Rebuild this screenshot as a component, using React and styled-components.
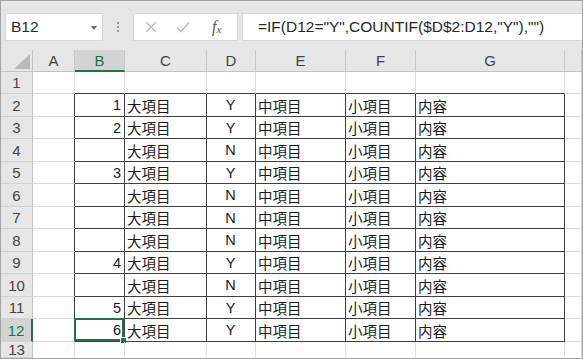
import React from "react";
import styled, { createGlobalStyle } from "styled-components";

const GREEN = "#217346";
const DARK = "#3f3f3f";
const GRID = "#dcdcdc";

const COLS = ["A", "B", "C", "D", "E", "F", "G", ""];
const WIDTHS = [32, 42, 50, 82, 49, 90, 70, 149, 17];
const HEIGHTS = [22, 22, 23, 22, 23, 22, 23, 22, 23, 22, 23, 22, 23, 16];

// [連番, 大項目の Y/N]
const DATA = [
  [1, "Y"], [2, "Y"], ["", "N"], [3, "Y"], ["", "N"], ["", "N"],
  ["", "N"], [4, "Y"], ["", "N"], [5, "Y"], [6, "Y"],
];

const GlobalStyle = createGlobalStyle`
  html, body { margin: 0; padding: 0; background: #fff; }
  body { font-family: "Liberation Sans", "Noto Sans CJK JP", sans-serif; }
`;

export default function App() {
  const rows = [];
  for (let r = 1; r <= 13; r++) {
    const item = DATA[r - 2];
    const inTable = r >= 2 && r <= 12;
    const selectedRow = r === 12;
    rows.push(
      <RowHeader key={`h${r}`} $selected={selectedRow}>{r}</RowHeader>
    );
    const values = item
      ? ["", item[0], "大項目", item[1], "中項目", "小項目", "内容", ""]
      : ["", "", "", "", "", "", "", ""];
    values.forEach((v, c) => {
      const tableCol = c >= 1 && c <= 6;
      let right = GRID;
      let bottom = GRID;
      if (inTable && (tableCol || c === 0)) right = DARK;
      if ((inTable || r === 1) && tableCol) bottom = DARK;
      if (r === 13) bottom = "transparent";
      const align = c === 1 ? "right" : c === 3 ? "center" : "left";
      rows.push(
        <Cell key={`${r}-${c}`} $right={right} $bottom={bottom} $align={align}>
          {v}
          {selectedRow && c === 1 && (
            <Selection>
              <FillHandle />
            </Selection>
          )}
        </Cell>
      );
    });
  }

  return (
    <Frame>
      <GlobalStyle />
      <Toolbar>
        <NameBox>
          <span>B12</span>
          <DropArrow />
        </NameBox>
        <Grip>
          <i />
          <i />
          <i />
        </Grip>
        <IconBox>
          <svg width="14" height="14" viewBox="0 0 14 14">
            <path d="M2 2 L12 12 M12 2 L2 12" stroke="#bdbdbd" strokeWidth="1.4" fill="none" />
          </svg>
          <svg width="16" height="14" viewBox="0 0 16 14">
            <path d="M2 7.5 L6 11.5 L14 2.5" stroke="#bdbdbd" strokeWidth="1.6" fill="none" />
          </svg>
          <Fx>
            f<sub>x</sub>
          </Fx>
        </IconBox>
        <FormulaBox>=IF(D12="Y",COUNTIF($D$2:D12,"Y"),"")</FormulaBox>
      </Toolbar>
      <Sheet>
        <Corner>
          <svg width="16" height="15" viewBox="0 0 16 15">
            <polygon points="16,0 16,15 0,15" fill="#b9b9b9" />
          </svg>
        </Corner>
        {COLS.map((c) => (
          <ColHeader key={c || "H"} $selected={c === "B"}>{c}</ColHeader>
        ))}
        {rows}
      </Sheet>
    </Frame>
  );
}

const Frame = styled.div`
  width: 583px;
  height: 359px;
  box-sizing: border-box;
  border: 1px solid #a3a3a3;
  overflow: hidden;
  background: #fff;
`;

const Toolbar = styled.div`
  height: 49px;
  background: #e6e6e6;
  display: flex;
  align-items: flex-start;
  padding: 12px 0 0 4px;
  box-sizing: border-box;
`;

const NameBox = styled.div`
  width: 98px;
  height: 28px;
  box-sizing: border-box;
  background: #fff;
  border: 1px solid #d6d6d6;
  display: flex;
  align-items: center;
  justify-content: space-between;
  padding: 0 5px 0 5px;
  font-size: 15.5px;
  color: #2b2b2b;
`;

const DropArrow = styled.span`
  width: 0;
  height: 0;
  border-left: 3.5px solid transparent;
  border-right: 3.5px solid transparent;
  border-top: 4px solid #666;
  margin-top: 2px;
`;

const Grip = styled.div`
  width: 30px;
  height: 28px;
  display: flex;
  flex-direction: column;
  align-items: center;
  justify-content: center;
  gap: 2px;

  i {
    width: 2px;
    height: 2px;
    background: #9a9a9a;
  }
`;

const IconBox = styled.div`
  width: 105px;
  height: 28px;
  box-sizing: border-box;
  background: #fff;
  border: 1px solid #d6d6d6;
  display: flex;
  align-items: center;
  padding: 0 0 0 10px;
  gap: 17px;
`;

const Fx = styled.span`
  font-family: "Liberation Serif", serif;
  font-style: italic;
  font-size: 16px;
  color: #555;
  margin-left: 4px;

  sub {
    font-size: 11px;
    vertical-align: -1px;
  }
`;

const FormulaBox = styled.div`
  flex: 1;
  height: 28px;
  margin-left: 4px;
  box-sizing: border-box;
  background: #fff;
  border: 1px solid #d6d6d6;
  border-right: none;
  display: flex;
  align-items: center;
  padding-left: 15px;
  font-size: 15.5px;
  color: #262626;
  white-space: nowrap;
`;

const Sheet = styled.div`
  display: grid;
  grid-template-columns: ${WIDTHS.map((w) => w + "px").join(" ")};
  grid-template-rows: ${HEIGHTS.map((h) => h + "px").join(" ")};
`;

const Corner = styled.div`
  background: #e6e6e6;
  border-right: 1px solid #c3c3c3;
  border-bottom: 1px solid #c3c3c3;
  display: flex;
  align-items: flex-end;
  justify-content: flex-end;
  padding: 0 2px 2px 0;
`;

const ColHeader = styled.div`
  background: ${(p) => (p.$selected ? "#d3d3d3" : "#e6e6e6")};
  color: ${(p) => (p.$selected ? GREEN : "#444")};
  border-right: 1px solid #c8c8c8;
  border-bottom: ${(p) => (p.$selected ? `2px solid ${GREEN}` : "1px solid #c3c3c3")};
  display: flex;
  align-items: center;
  justify-content: center;
  font-size: 15px;
  padding-top: ${(p) => (p.$selected ? "1px" : "0")};
`;

const RowHeader = styled.div`
  background: ${(p) => (p.$selected ? "#d3d3d3" : "#e6e6e6")};
  color: ${(p) => (p.$selected ? GREEN : "#444")};
  border-right: ${(p) => (p.$selected ? `2px solid ${GREEN}` : "1px solid #c3c3c3")};
  border-bottom: 1px solid #d2d2d2;
  display: flex;
  align-items: center;
  justify-content: center;
  font-size: 15px;
`;

const Cell = styled.div`
  position: relative;
  border-right: 1px solid ${(p) => p.$right};
  border-bottom: 1px solid ${(p) => p.$bottom};
  display: flex;
  align-items: center;
  justify-content: ${(p) =>
    p.$align === "right" ? "flex-end" : p.$align === "center" ? "center" : "flex-start"};
  padding: 0 3px 0 2px;
  font-size: 14.5px;
  color: #1a1a1a;
  white-space: nowrap;
`;

const Selection = styled.div`
  position: absolute;
  left: -1px;
  top: -1px;
  right: 0;
  bottom: 0;
  border: 2px solid ${GREEN};
  pointer-events: none;
`;

const FillHandle = styled.div`
  position: absolute;
  right: -5px;
  bottom: -5px;
  width: 5px;
  height: 5px;
  background: ${GREEN};
  border: 1px solid #fff;
`;
